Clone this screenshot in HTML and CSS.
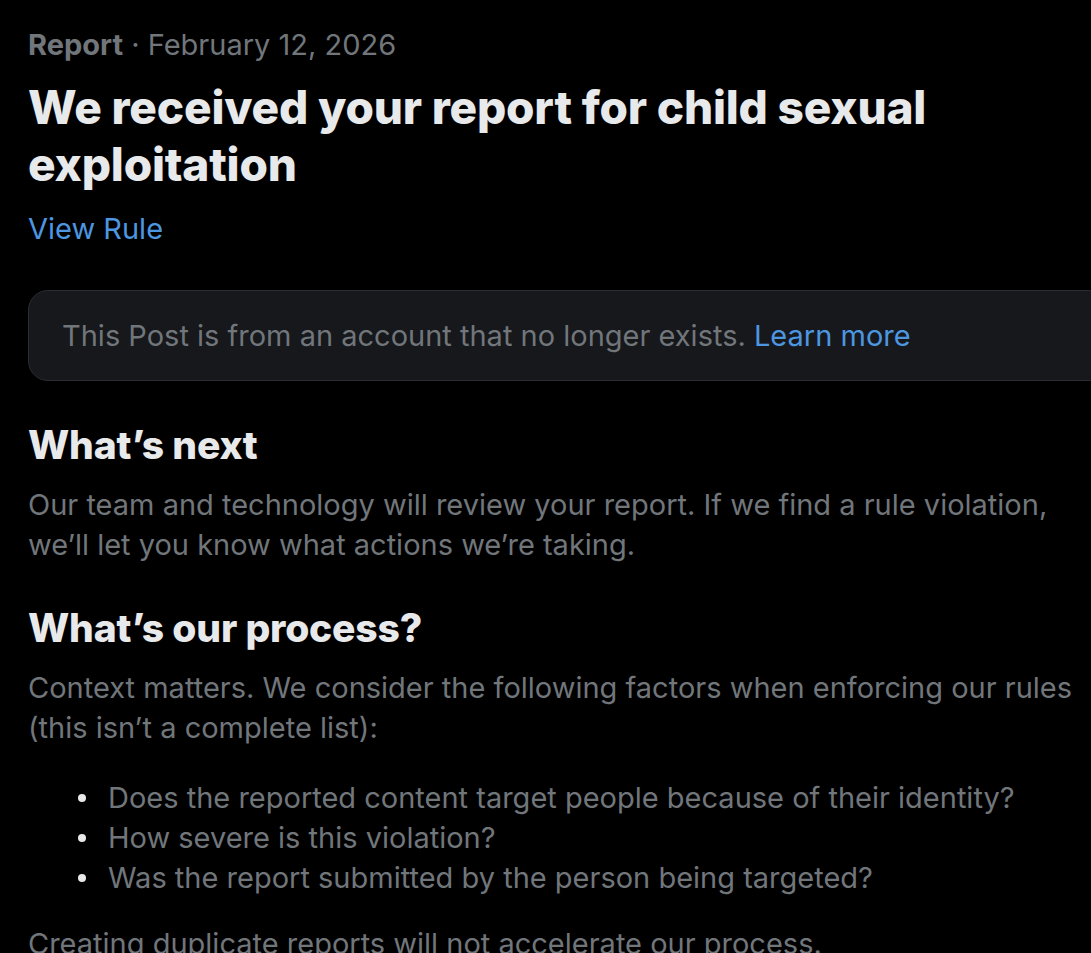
FILE: index.html
```html
<!DOCTYPE html>
<html lang="en">
<head>
<meta charset="utf-8">
<title>Report</title>
<link rel="stylesheet" href="styles.css">
</head>
<body>
<main class="page">
  <div class="meta"><span class="meta-label">Report</span> · February 12, 2026</div>
  <h1 class="title">We received your report for child sexual exploitation</h1>
  <a class="link rule-link" href="#">View Rule</a>
  <div class="notice"><span>This Post is from an account that no longer exists. <a class="link" href="#">Learn more</a></span></div>
  <h2 class="heading">What’s next</h2>
  <p class="body">Our team and technology will review your report. If we find a rule violation, we’ll let you know what actions we’re taking.</p>
  <h2 class="heading heading-process">What’s our process?</h2>
  <p class="body">Context matters. We consider the following factors when enforcing our rules (this isn’t a complete list):</p>
  <ul class="factors">
    <li>Does the reported content target people because of their identity?</li>
    <li>How severe is this violation?</li>
    <li>Was the report submitted by the person being targeted?</li>
  </ul>
  <p class="body">Creating duplicate reports will not accelerate our process.</p>
</main>
</body>
</html>
```
FILE: styles.css
```css
html, body {
  margin: 0;
  padding: 0;
  background: #000;
}
body {
  font-family: Inter, "Noto Sans", sans-serif;
  color: #71767b;
  overflow: hidden;
}
.page {
  padding: 26px 0 0 28px;
  display: flex;
  flex-direction: column;
  align-items: flex-start;
}
.meta {
  font-size: 29px;
  line-height: 38px;
  color: #71767b;
}
.meta-label {
  font-weight: 700;
}
.title {
  margin: 15px 0 0;
  font-size: 46px;
  line-height: 57px;
  font-weight: 800;
  letter-spacing: -0.2px;
  color: #e7e9ea;
  width: 1000px;
}
.link {
  color: #4d96e0;
  text-decoration: none;
}
.rule-link {
  margin-top: 17px;
  font-size: 29px;
  line-height: 38px;
}
.notice {
  box-sizing: border-box;
  margin-top: 42px;
  width: 1080px;
  height: 91px;
  padding: 0 33px;
  display: flex;
  align-items: center;
  background: #16181c;
  border: 1px solid #2a2d31;
  border-radius: 20px;
  font-size: 29px;
  color: #71767b;
}
.heading {
  margin: 41px 0 0;
  font-size: 39px;
  line-height: 46px;
  font-weight: 800;
  letter-spacing: -0.2px;
  color: #e7e9ea;
}
.heading-process {
  margin-top: 40px;
}
.body {
  margin: 17px 0 0;
  font-size: 29px;
  line-height: 40px;
  color: #71767b;
  max-width: 1048px;
}
.factors {
  margin: 30px 0 0;
  padding-left: 50px;
  list-style: none;
  font-size: 29px;
  line-height: 40px;
  color: #71767b;
}
.factors li {
  display: flex;
  align-items: center;
  gap: 22px;
}
.factors li::before {
  content: "";
  flex: none;
  width: 8px;
  height: 8px;
  border-radius: 50%;
  background: #e7e9ea;
}
.factors + .body {
  margin-top: 26px;
}
```
